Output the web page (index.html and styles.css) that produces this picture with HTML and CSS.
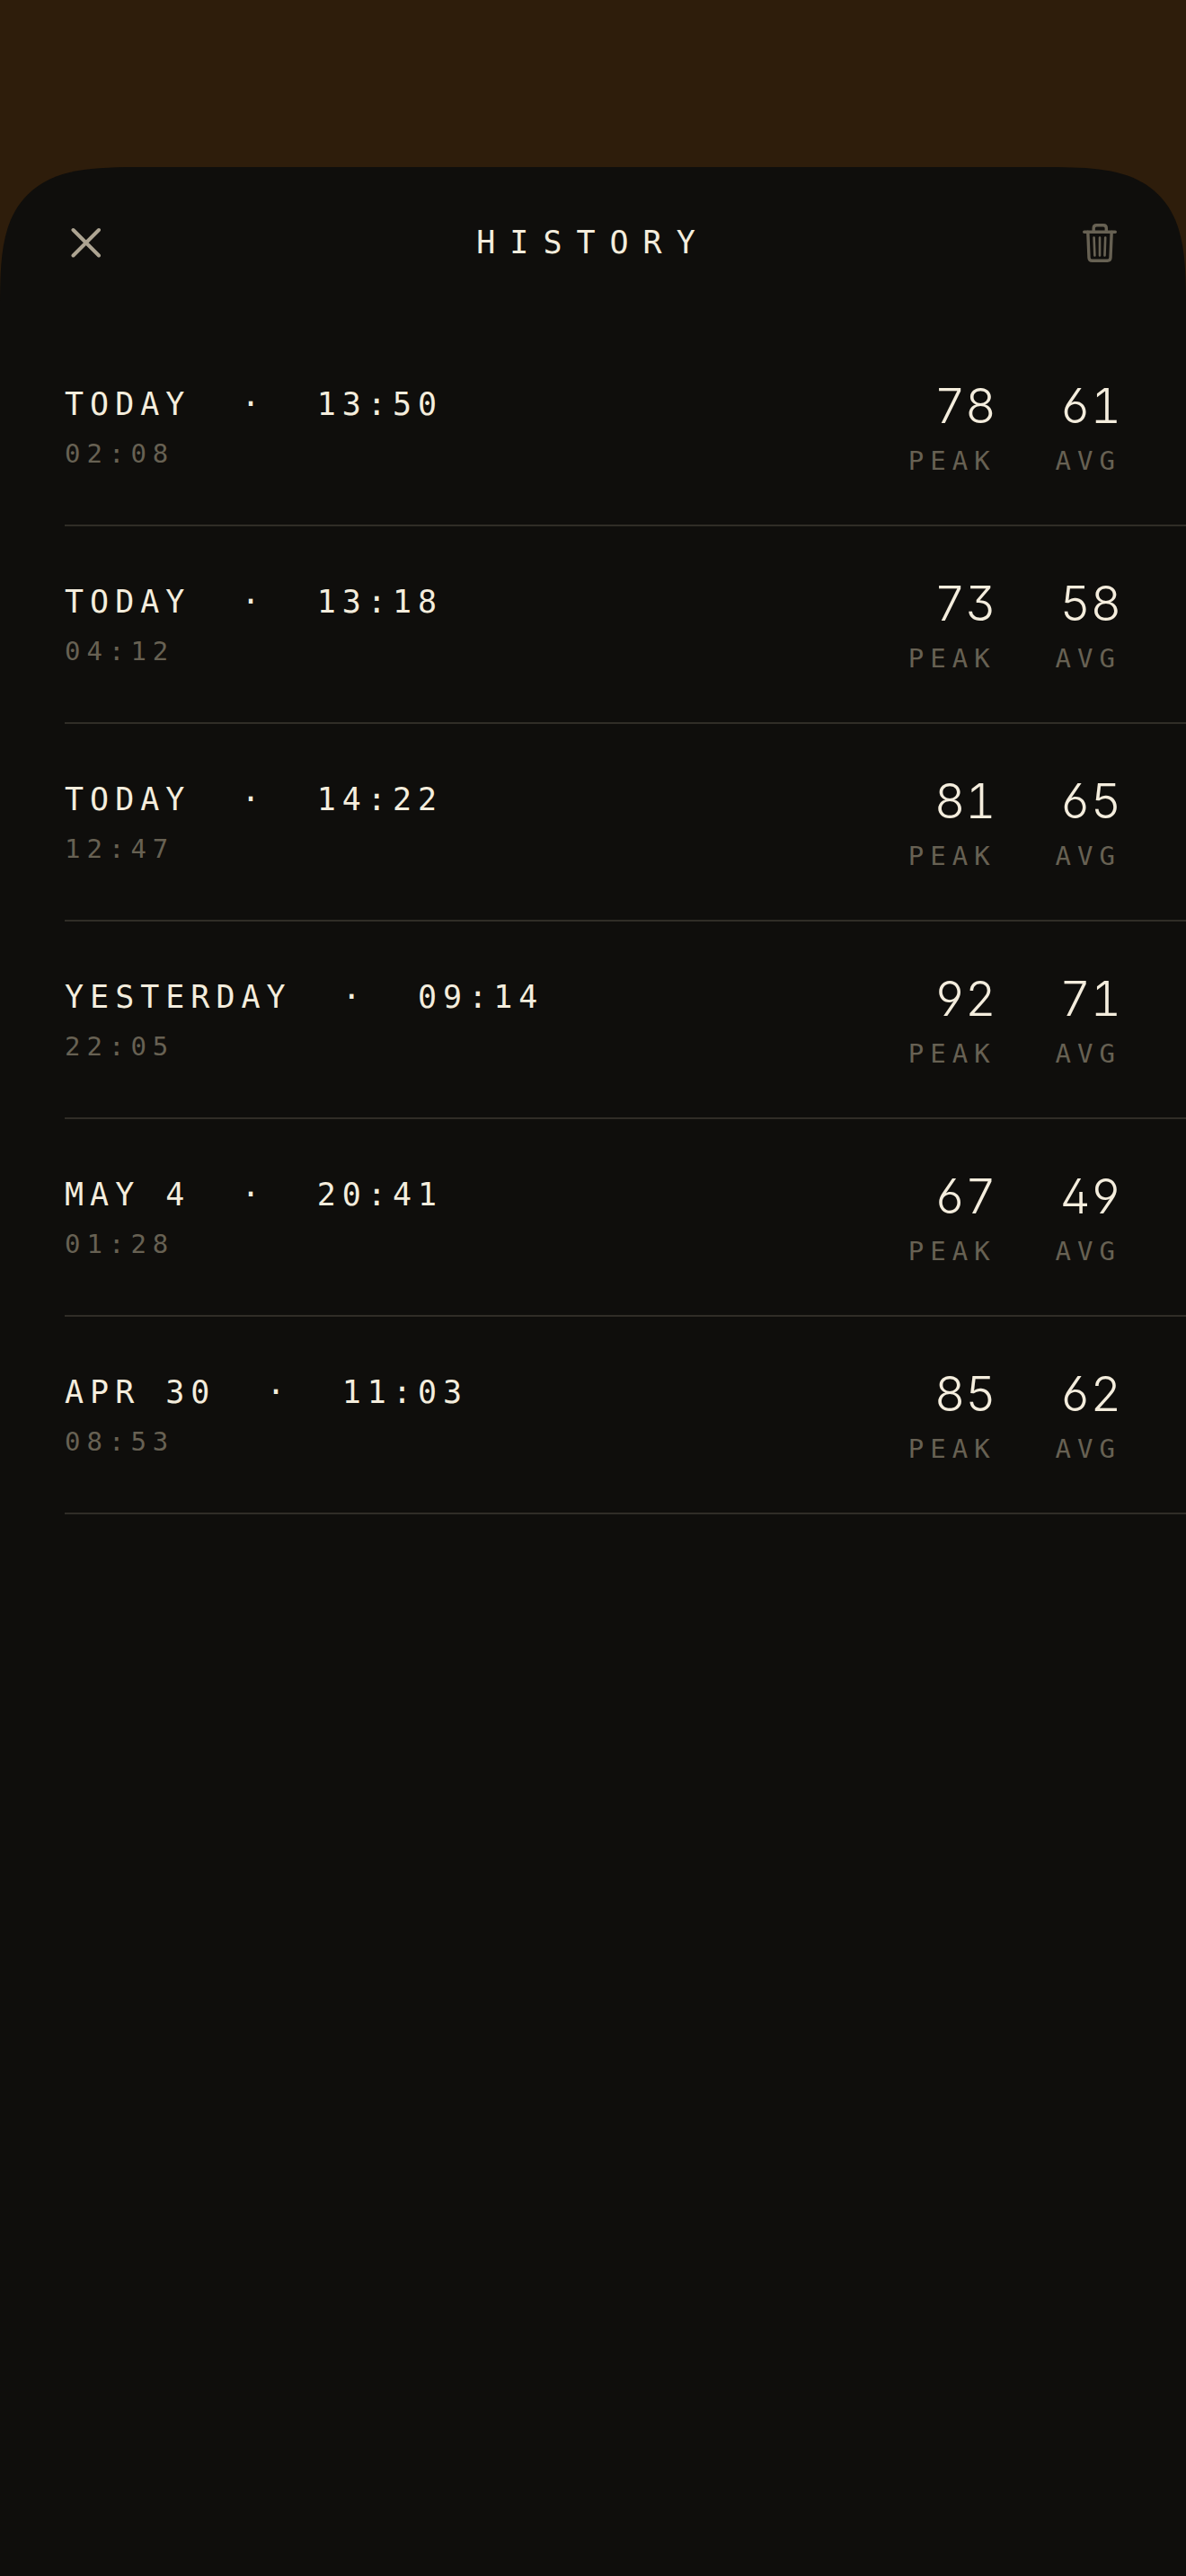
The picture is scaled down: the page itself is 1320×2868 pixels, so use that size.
FILE: index.html
```html
<!DOCTYPE html>
<html lang="en">
<head>
    <meta charset="utf-8">
    <meta name="viewport" content="width=device-width, initial-scale=1">
    <title>History</title>
    <link rel="stylesheet" href="styles.css">
</head>
<body>
    <main class="sheet">
        <header class="sheetHeader">
            <button class="iconButton close" type="button" aria-label="Close">
                <svg viewBox="0 0 48 48"><path d="M9.500 10L38 38.500M38 10L9.500 38.500"/></svg>
            </button>
            <h1>HISTORY</h1>
            <button class="iconButton trash" type="button" aria-label="Delete all">
                <svg viewBox="0 0 48 48">
                    <path stroke-width="3.400" d="M6.700 12.200H41.300M17.200 12V8Q17.200 4.700 20.500 4.700H28Q31.300 4.700 31.300 8V12M10.800 12L12 41Q12.200 44.300 15.500 44.300H32.500Q35.800 44.300 36 41L37.200 12"/>
                    <path stroke-width="2.600" d="M17.600 18.500L18.400 38.500M24 18.500V38.500M30.200 18.500L29.500 38.500"/>
                </svg>
            </button>
        </header>

        <ul class="sessions">
            <li class="session">
                <div class="when">
                    <span class="date">TODAY  ·  13:50</span>
                    <span class="small">02:08</span>
                </div>
                <div class="stat"><span class="number">78</span><span class="small">PEAK</span></div>
                <div class="stat"><span class="number">61</span><span class="small">AVG</span></div>
            </li>
            <li class="session">
                <div class="when">
                    <span class="date">TODAY  ·  13:18</span>
                    <span class="small">04:12</span>
                </div>
                <div class="stat"><span class="number">73</span><span class="small">PEAK</span></div>
                <div class="stat"><span class="number">58</span><span class="small">AVG</span></div>
            </li>
            <li class="session">
                <div class="when">
                    <span class="date">TODAY  ·  14:22</span>
                    <span class="small">12:47</span>
                </div>
                <div class="stat"><span class="number">81</span><span class="small">PEAK</span></div>
                <div class="stat"><span class="number">65</span><span class="small">AVG</span></div>
            </li>
            <li class="session">
                <div class="when">
                    <span class="date">YESTERDAY  ·  09:14</span>
                    <span class="small">22:05</span>
                </div>
                <div class="stat"><span class="number">92</span><span class="small">PEAK</span></div>
                <div class="stat"><span class="number">71</span><span class="small">AVG</span></div>
            </li>
            <li class="session">
                <div class="when">
                    <span class="date">MAY 4  ·  20:41</span>
                    <span class="small">01:28</span>
                </div>
                <div class="stat"><span class="number">67</span><span class="small">PEAK</span></div>
                <div class="stat"><span class="number">49</span><span class="small">AVG</span></div>
            </li>
            <li class="session">
                <div class="when">
                    <span class="date">APR 30  ·  11:03</span>
                    <span class="small">08:53</span>
                </div>
                <div class="stat"><span class="number">85</span><span class="small">PEAK</span></div>
                <div class="stat"><span class="number">62</span><span class="small">AVG</span></div>
            </li>
        </ul>
    </main>
</body>
</html>
```
FILE: styles.css
```css
* {
    box-sizing: border-box;
}

body {
    margin: 0;
    min-height: 100vh;
    padding-top: 186px;
    display: flex;
    flex-direction: column;
    background: #2e1d0b;
    color: #f4eddd;
    font-family: "DejaVu Sans Mono", "Liberation Mono", monospace;
}

.sheet {
    flex: 1;
    background: #0f0e0c;
    border-radius: 112px 112px 0 0;
}

/* smoother corners where the browser has them */
@supports (corner-shape: superellipse(1.7)) {
    .sheet {
        border-radius: 160px 160px 0 0;
        corner-shape: superellipse(1.7);
    }
}

.sheetHeader {
    display: flex;
    align-items: center;
    justify-content: space-between;
    height: 168px;
    padding: 0 72px;
}

h1 {
    margin: 0;
    font-size: 35px;
    font-weight: normal;
    letter-spacing: 16px;
}

.iconButton {
    width: 48px;
    height: 48px;
    padding: 0;
    border: 0;
    background: none;
    color: #ada492;
    cursor: pointer;
}

.iconButton svg {
    display: block;
    fill: none;
    stroke: currentColor;
    stroke-linecap: round;
    stroke-linejoin: round;
}

.close svg {
    stroke-width: 4px;
}

.iconButton.trash {
    color: #676153;
}

.sessions {
    list-style: none;
    margin: 0;
    padding: 12px 0 0 72px;
}

.session {
    display: flex;
    align-items: center;
    gap: 66px;
    height: 220px;
    padding-right: 72px;
    border-bottom: 2px solid #302d27;
}

.when {
    flex: 1;
    display: flex;
    flex-direction: column;
    gap: 14px;
}

.date {
    font-size: 35px;
    line-height: 46px;
    letter-spacing: 7px;
    white-space: pre;
}

.small {
    color: #676153;
    font-size: 29px;
    line-height: 36px;
    letter-spacing: 7px;
}

.stat {
    display: flex;
    flex-direction: column;
    align-items: flex-end;
    gap: 12px;
    padding-top: 2px;
}

.number {
    font-family: Inter, "DejaVu Sans", sans-serif;
    font-size: 53px;
    font-weight: 300;
    line-height: 62px;
    font-feature-settings: "tnum", "ss01";
}
```
